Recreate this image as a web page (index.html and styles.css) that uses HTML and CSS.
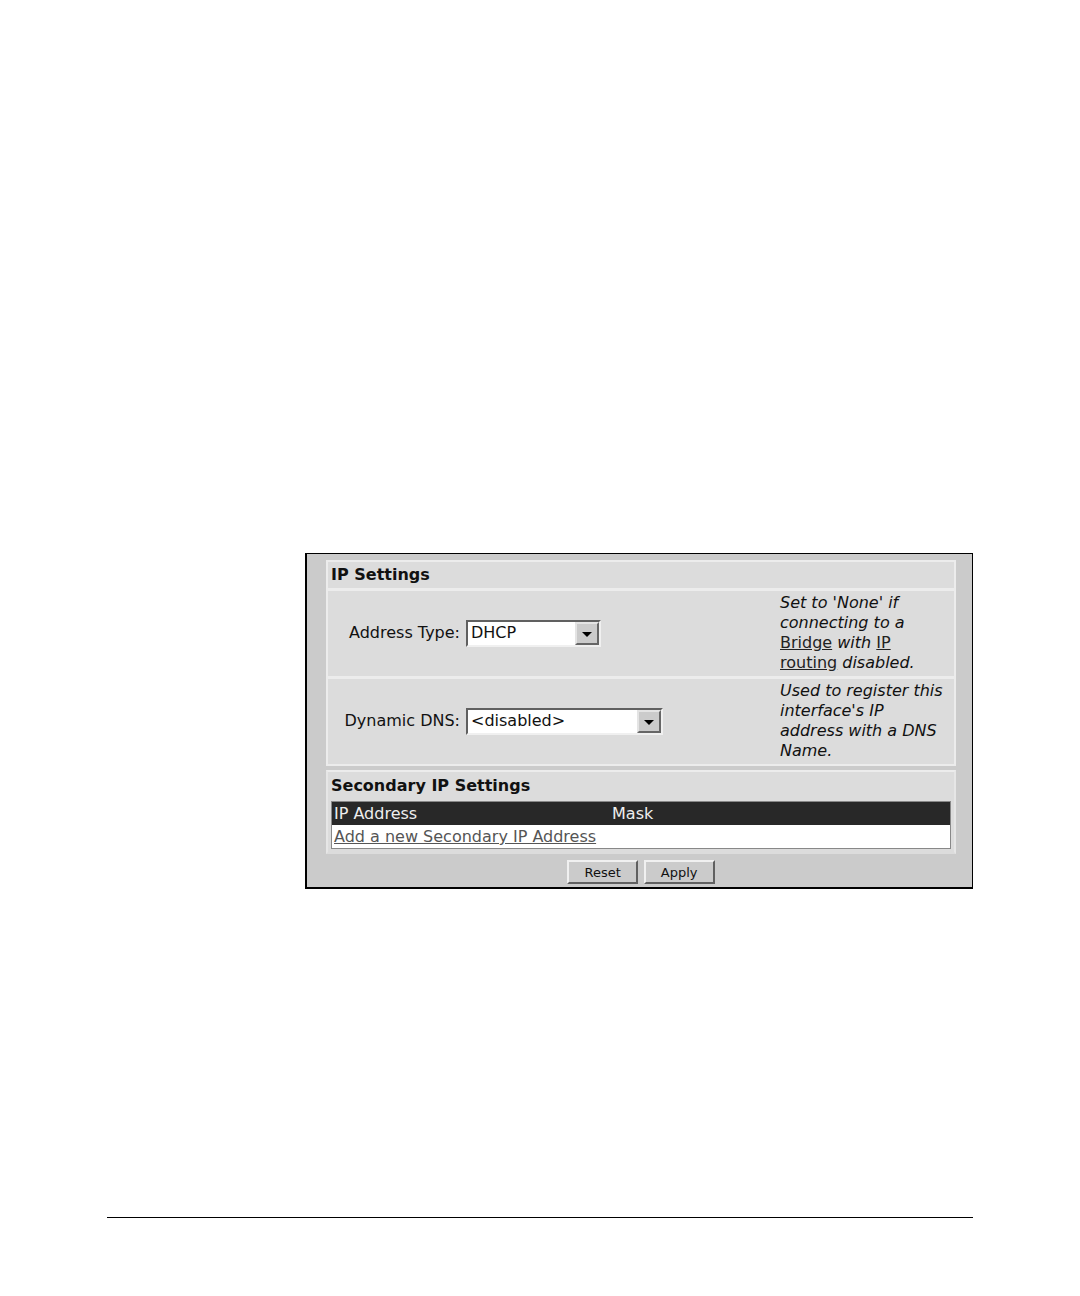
FILE: index.html
```html
<!DOCTYPE html>
<html lang="en">
<head>
    <meta charset="UTF-8">
    <title>IP Settings</title>
    <link rel="stylesheet" href="styles.css">
</head>
<body>
    <main class="page">
        <form class="window" onsubmit="return false">
            <section class="panel">
                <h2>IP Settings</h2>
                <div class="row">
                    <label for="addressType">Address Type:</label>
                    <div class="field">
                        <div class="dropdown">
                            <select id="addressType">
                                <option>DHCP</option>
                                <option>Static</option>
                                <option>None</option>
                            </select>
                            <span class="arrow"></span>
                        </div>
                    </div>
                    <p class="help">Set to 'None' if connecting to a <a href="#">Bridge</a> with <a href="#">IP routing</a> disabled.</p>
                </div>
                <div class="row">
                    <label for="dynamicDns">Dynamic DNS:</label>
                    <div class="field">
                        <div class="dropdown wide">
                            <select id="dynamicDns">
                                <option>&lt;disabled&gt;</option>
                            </select>
                            <span class="arrow"></span>
                        </div>
                    </div>
                    <p class="help">Used to register this interface's IP address with a DNS Name.</p>
                </div>
            </section>

            <section class="panel secondary">
                <h2>Secondary IP Settings</h2>
                <table>
                    <thead>
                        <tr><th class="address">IP Address</th><th>Mask</th></tr>
                    </thead>
                    <tbody>
                        <tr><td colspan="2"><a href="#">Add a new Secondary IP Address</a></td></tr>
                    </tbody>
                </table>
            </section>

            <div class="buttons">
                <button type="reset">Reset</button>
                <button type="submit">Apply</button>
            </div>
        </form>
        <hr>
    </main>
</body>
</html>
```
FILE: styles.css
```css
* {box-sizing: border-box}
body {
    margin: 0;
    background: #fff;
    color: #111;
    font-family: Verdana, "DejaVu Sans", sans-serif;
    font-size: 16px;
    line-height: 20px;
}
.page {
    padding: 553px 107px 0;
}
.window {
    margin-left: 198px;
    padding: 6px 16px 3px 19px;
    background: #cbcbcb;
    border: 1px solid #000;
    border-width: 1px 1px 2px 2px;
}
.panel {
    margin-bottom: 4px;
    background: #dcdcdc;
    border: 2px solid #ececec;
}
h2 {
    margin: 0;
    padding: 3px;
    font-size: 16px;
    line-height: 20px;
}
.row {
    display: flex;
    align-items: center;
    padding: 2px 0 3px;
    border-top: 3px solid #ececec;
}
.row label {
    width: 132px;
    text-align: right;
}
.field {
    flex: 1;
    padding-left: 6px;
}
.help {
    width: 174px;
    margin: 0;
    padding-right: 5px;
    font-style: italic;
}
.help a {
    color: #222;
    font-style: normal;
}

/* Drop-downs */
.dropdown {
    position: relative;
    width: 135px;
}
.dropdown.wide {
    width: 197px;
}
select {
    display: block;
    width: 100%;
    height: 27px;
    padding: 0 28px 0 3px;
    appearance: none;
    background: #fff;
    border: 2px solid;
    border-color: #606060 #f0f0f0 #f0f0f0 #606060;
    border-radius: 0;
    color: #111;
    font: inherit;
}
.arrow {
    position: absolute;
    top: 2px;
    right: 2px;
    width: 24px;
    height: 23px;
    background: #cbcbcb;
    border: 2px solid;
    border-color: #e4e4e4 #666 #666 #e4e4e4;
    pointer-events: none;
}
.arrow::after {
    content: "";
    position: absolute;
    top: 8px;
    left: 5px;
    border: 5px solid transparent;
    border-top-color: #000;
    border-bottom: none;
}

/* Secondary addresses */
.secondary {
    margin-bottom: 6px;
    padding: 0 3px 3px;
    border-color: #ececec #e6e6e6 #dcdcdc;
}
.secondary h2 {
    padding: 4px 0 5px;
}
table {
    width: 100%;
    border: 1px solid #888;
    border-collapse: collapse;
    background: #fff;
}
th, td {
    padding: 2px 2px 1px;
    text-align: left;
    font-weight: normal;
}
th {
    background: #282828;
    color: #eee;
}
.address {
    width: 45%;
}
td a {
    color: #555;
}

.buttons {
    display: flex;
    justify-content: center;
    gap: 6px;
}
button {
    height: 24px;
    padding: 0 15px;
    background: #cbcbcb;
    border: 2px solid;
    border-color: #f0f0f0 #606060 #606060 #f0f0f0;
    color: #111;
    font-family: inherit;
    font-size: 13px;
}
hr {
    margin: 328px 0 0;
    border: none;
    border-top: 1px solid #000;
}
```
